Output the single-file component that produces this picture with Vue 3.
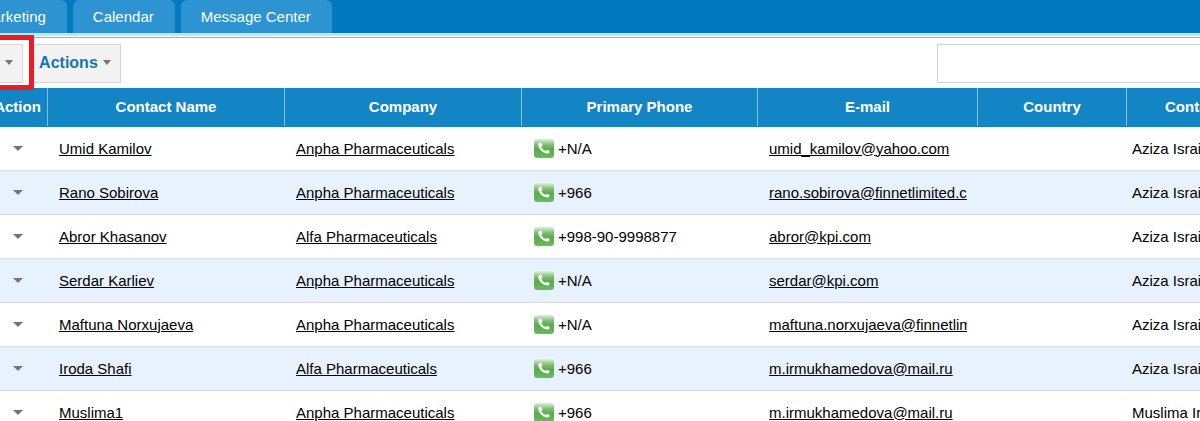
<script setup>
const tabs = ['Marketing', 'Calendar', 'Message Center']

const columns = [
  { key: 'action', label: 'Action' },
  { key: 'name', label: 'Contact Name' },
  { key: 'company', label: 'Company' },
  { key: 'phone', label: 'Primary Phone' },
  { key: 'email', label: 'E-mail' },
  { key: 'country', label: 'Country' },
  { key: 'owner', label: 'Contact Owner' },
]

const contacts = [
  { name: 'Umid Kamilov', company: 'Anpha Pharmaceuticals', phone: '+N/A', email: 'umid_kamilov@yahoo.com', owner: 'Aziza Israilova' },
  { name: 'Rano Sobirova', company: 'Anpha Pharmaceuticals', phone: '+966', email: 'rano.sobirova@finnetlimited.com', owner: 'Aziza Israilova' },
  { name: 'Abror Khasanov', company: 'Alfa Pharmaceuticals', phone: '+998-90-9998877', email: 'abror@kpi.com', owner: 'Aziza Israilova' },
  { name: 'Serdar Karliev', company: 'Anpha Pharmaceuticals', phone: '+N/A', email: 'serdar@kpi.com', owner: 'Aziza Israilova' },
  { name: 'Maftuna Norxujaeva', company: 'Anpha Pharmaceuticals', phone: '+N/A', email: 'maftuna.norxujaeva@finnetlimited.com', owner: 'Aziza Israilova' },
  { name: 'Iroda Shafi', company: 'Alfa Pharmaceuticals', phone: '+966', email: 'm.irmukhamedova@mail.ru', owner: 'Aziza Israilova' },
  { name: 'Muslima1', company: 'Anpha Pharmaceuticals', phone: '+966', email: 'm.irmukhamedova@mail.ru', owner: 'Muslima Irmukhamedova' },
]
</script>

<template>
  <div class="page">
    <nav class="tabs">
      <a v-for="tab in tabs" :key="tab" href="#" class="tab">{{ tab }}</a>
    </nav>

    <div class="toolbar">
      <button type="button" class="tool add">Add<span class="caret"></span></button>
      <button type="button" class="tool">Actions<span class="caret"></span></button>
      <input class="search" type="text" aria-label="Search contacts" />
      <div class="highlight"></div>
    </div>

    <table class="contacts">
      <colgroup>
        <col v-for="c in columns" :key="c.key" :class="'col-' + c.key" />
      </colgroup>
      <thead>
        <tr>
          <th v-for="c in columns" :key="c.key" scope="col" :class="'head-' + c.key"><div class="head">{{ c.label }}</div></th>
        </tr>
      </thead>
      <tbody>
        <tr v-for="contact in contacts" :key="contact.name">
          <td class="action">
            <button type="button" class="row-menu" :aria-label="'Actions for ' + contact.name"><span class="caret"></span></button>
          </td>
          <td><div class="clip"><a href="#">{{ contact.name }}</a></div></td>
          <td><div class="clip"><a href="#">{{ contact.company }}</a></div></td>
          <td class="phone-cell">
            <div class="phone">
              <svg class="call" viewBox="0 0 20 20" aria-hidden="true">
                <defs>
                  <linearGradient id="call-fill" x1="0" y1="0" x2="0" y2="1">
                    <stop offset="0" stop-color="#e2f0de" />
                    <stop offset="0.3" stop-color="#7fbe74" />
                    <stop offset="0.55" stop-color="#58ab4b" />
                    <stop offset="1" stop-color="#6cba60" />
                  </linearGradient>
                </defs>
                <rect width="20" height="19" rx="3" fill="url(#call-fill)" />
                <path d="M4.8 4.2 L6.6 3.4 Q7.2 3.3 7.5 3.9 L8.5 6.3 Q8.6 6.9 8.1 7.3 L7.2 8 Q8.4 10.6 11.2 11.8 L12.4 10.9 Q13 10.6 13.6 10.9 L15.7 12 Q16.3 12.5 15.8 13.1 L14.6 14.2 Q13.1 15 10.9 14.1 Q6.3 12.1 4.5 7.5 Q3.8 5.3 4.8 4.2 Z" fill="#f4fbf2" />
              </svg>
              <span>{{ contact.phone }}</span>
            </div>
          </td>
          <td><div class="clip"><a href="#">{{ contact.email }}</a></div></td>
          <td></td>
          <td class="owner">{{ contact.owner }}</td>
        </tr>
      </tbody>
    </table>
  </div>
</template>

<style>
body {
  background: #fff;
  overflow: hidden;
}
</style>

<style scoped>
.page {
  overflow: hidden;
  color: #000;
  font-family: "Liberation Sans", Arial, sans-serif;
  font-size: 15px;
  line-height: 20px;
}

.tabs {
  display: flex;
  gap: 6px;
  padding-right: 12px;
  background: #0079c1;
  border-bottom: 3px solid #bfe6fb;
}

.tab {
  padding: 7px 21px 6px 20px;
  border-radius: 0 6px 0 0;
  background: #2d93d1;
  color: #fff;
  text-decoration: none;
  white-space: nowrap;
}

.tab:first-child {
  margin-left: -40px;
}

.tab + .tab {
  border-radius: 6px 6px 0 0;
}

.toolbar {
  position: relative;
  display: flex;
  gap: 6px;
  margin-top: 1px;
  padding: 6px 0 5px;
  border-top: 1px solid #7fb5e6;
}

.tool {
  display: flex;
  align-items: center;
  gap: 5px;
  height: 39px;
  padding: 0 9px 2px;
  border: 1px solid #d6d6d6;
  background: #f3f3f3;
  color: #1277b3;
  font: bold 16px/20px "Liberation Sans", Arial, sans-serif;
}

.add {
  margin-left: -41px;
  color: #cdf4f1;
}

.caret {
  width: 0;
  height: 0;
  border: solid transparent;
  border-width: 5px 4px 0;
  border-top-color: #757575;
}

.row-menu .caret {
  border-width: 5px 5px 0;
}

.search {
  box-sizing: border-box;
  width: 300px;
  height: 39px;
  margin: 0 -37px 0 auto;
  padding: 0 10px;
  border: 1px solid #d3d3d3;
  background: #fff;
  font: inherit;
}

.highlight {
  position: absolute;
  top: -3px;
  left: -6px;
  width: 30px;
  height: 45px;
  border: 5px solid #ed1c24;
  pointer-events: none;
}

.contacts {
  width: calc(100% + 12px);
  margin-left: -12px;
  border-collapse: separate;
  border-spacing: 0;
  table-layout: fixed;
}

.col-action { width: 60px; }
.col-name,
.col-company { width: 237px; }
.col-phone { width: 236px; }
.col-email { width: 220px; }
.col-country { width: 149px; }

th {
  padding: 0 0 1px;
  background: #1385c4;
  color: #fff;
  font-weight: bold;
  white-space: nowrap;
}

.head {
  padding: 9px 0;
  border-right: 1px solid #84bfe1;
}

.head-owner {
  padding-left: 38px;
  text-align: left;
}

.head-owner .head {
  border-right: 0;
}

td {
  height: 43px;
  padding: 0 11px;
  border-bottom: 1px solid #dadada;
  white-space: nowrap;
}

tbody tr:nth-child(even) {
  background: #e8f2ff;
}

td a {
  color: #000;
  text-decoration: underline;
}

.clip {
  overflow: hidden;
}

td.action {
  padding: 0;
}

.row-menu {
  display: flex;
  justify-content: center;
  width: 100%;
  padding: 8px 0;
  border: 0;
  background: transparent;
}

td.phone-cell {
  padding-left: 12px;
}

.phone {
  display: flex;
  align-items: flex-start;
  gap: 4px;
}

.call {
  width: 20px;
  height: 20px;
}

td.owner {
  padding: 0 0 0 5px;
  overflow: hidden;
}
</style>
